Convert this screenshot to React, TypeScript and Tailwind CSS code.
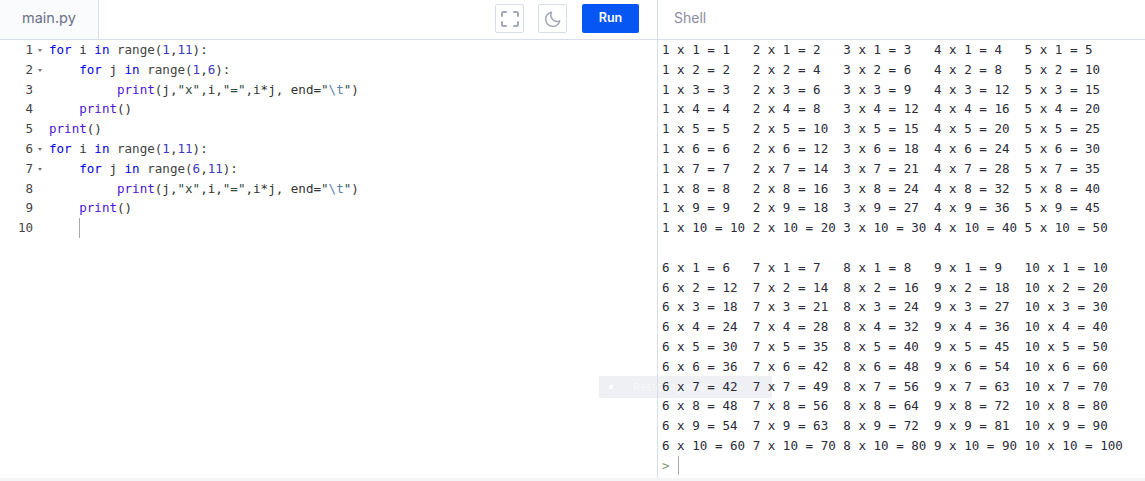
import React from 'react';

const mono = "font-['DejaVu_Sans_Mono',monospace] text-[12.56px] leading-[19.8px]";

const Kw: React.FC<{ children: React.ReactNode }> = ({ children }) => <span className="text-[#0000e0]">{children}</span>;
const Fn: React.FC<{ children: React.ReactNode }> = ({ children }) => <span className="text-[#4a14d8]">{children}</span>;
const Str: React.FC<{ children: React.ReactNode }> = ({ children }) => <span className="text-[#2f4a3c]">{children}</span>;
const Num: React.FC<{ children: React.ReactNode }> = ({ children }) => <span className="text-[#3a3ac0]">{children}</span>;

const loop = (a: string, b: string) => [
  <><Kw>for</Kw> i <Kw>in</Kw> <span className="text-[#444]">range(</span><Num>1</Num>,<Num>11</Num>):</>,
  <>    <Kw>for</Kw> j <Kw>in</Kw> <span className="text-[#444]">range(</span><Num>{a}</Num>,<Num>{b}</Num>):</>,
  <>         <Fn>print</Fn>(j,<Str>"x"</Str>,i,<Str>"="</Str>,i*j, end=<Str>"<span className="text-[#5b7fa8]">\t</span>"</Str>)</>,
  <>    <Fn>print</Fn>()</>,
];

const code = [
  ...loop('1', '6'),
  <><Fn>print</Fn>()</>,
  ...loop('6', '11'),
  <>    <span className="inline-block w-px h-[19.8px] align-top bg-[#aaa]" /></>,
];

const folds = [1, 2, 6, 7];

const row = (from: number, to: number, i: number) => {
  const cells: string[] = [];
  for (let j = from; j <= to; j++) cells.push(`${j} x ${i} = ${i * j}`);
  return cells.join('\t');
};

const lines: string[] = [];
for (let i = 1; i <= 10; i++) lines.push(row(1, 5, i));
lines.push('');
for (let i = 1; i <= 10; i++) lines.push(row(6, 10, i));

export default function App() {
  return (
    <div className="w-[1145px] h-[481px] bg-white flex flex-col overflow-hidden relative">
      <div className="h-10 flex border-b border-[#d9dfe9] shrink-0">
        <div className="w-[657px] flex items-center justify-between pr-[18px]">
          <div className="w-[99px] h-full bg-[#fafbfc] border-r border-[#d9dfe9] flex items-center pl-[22px] pb-[4px] font-['Inter',sans-serif] text-[14.5px] text-[#6b7089]">
            main.py
          </div>
          <div className="flex items-center pb-[2px]">
            <button className="w-[29px] h-[29px] border border-[#d9dfe9] rounded-[2px] flex items-center justify-center text-[#a3a6b8] mr-[14px]">
              <svg width="18" height="16" viewBox="0 0 18 16" fill="none" stroke="currentColor" strokeWidth="2" strokeLinecap="round">
                <path d="M1 5V2.5A1.5 1.5 0 0 1 2.5 1H5M13 1h2.5A1.5 1.5 0 0 1 17 2.5V5M17 11v2.5a1.5 1.5 0 0 1-1.5 1.5H13M5 15H2.5A1.5 1.5 0 0 1 1 13.5V11" />
              </svg>
            </button>
            <button className="w-[29px] h-[29px] border border-[#d9dfe9] rounded-[2px] flex items-center justify-center text-[#a3a6b8] mr-[15px]">
              <svg width="18" height="18" viewBox="0 0 24 24" fill="none" stroke="currentColor" strokeWidth="2" strokeLinejoin="round">
                <path d="M10 3a9.5 9.5 0 1 0 11 11.5A8.5 8.5 0 0 1 10 3z" />
              </svg>
            </button>
            <button className="w-[57px] h-[29px] bg-[#0556f3] rounded-[2px] text-white font-['Inter',sans-serif] font-semibold text-[12.5px]">
              Run
            </button>
          </div>
        </div>
        <div className="flex-1 border-l border-[#d9dfe9] flex items-center pl-4 pb-[4px] font-['Inter',sans-serif] text-[14px] text-[#8a8ea3]">
          Shell
        </div>
      </div>
      <div className="flex-1 flex min-h-0 border-b-[3px] border-[#f4f5f7]">
        <div className={`w-[657px] text-[#333] ${mono}`}>
          <div className="flex">
            <div className="w-[49px] shrink-0">
              {code.map((_, i) => (
                <div key={i} className="relative h-[19.8px] pr-[16px] text-right text-[#444]">
                  {i + 1}
                  {folds.includes(i + 1) && (
                    <span className="absolute left-[38px] top-[9px] w-0 h-0 border-x-[2.5px] border-x-transparent border-t-[3px] border-t-[#777]" />
                  )}
                </div>
              ))}
            </div>
            <div>
              {code.map((c, i) => (
                <div key={i} className="h-[19.8px] whitespace-pre">{c}</div>
              ))}
            </div>
          </div>
        </div>
        <div className={`flex-1 border-l border-[#d9dfe9] pl-1 text-[#2b2b3a] relative z-10 ${mono} [tab-size:12]`}>
          {lines.map((l, i) => (
            <div key={i} className="h-[19.8px] whitespace-pre">{l}</div>
          ))}
          <div className="h-[19.8px] flex items-center text-[#7a9a7a]">
            <span>&gt;</span>
            <span className="ml-2 w-px h-[19px] bg-[#aaa]" />
          </div>
        </div>
      </div>
      <div className="absolute left-[599px] top-[376px] w-[173px] h-[22px] bg-[#eef0f3] flex items-center pl-[10px] pointer-events-none">
        <span className="w-1 h-1 bg-white" />
        <span className="ml-[20px] text-[11px] text-[#f8f9fa] font-['Inter',sans-serif]">Restoring shell</span>
      </div>
    </div>
  );
}
